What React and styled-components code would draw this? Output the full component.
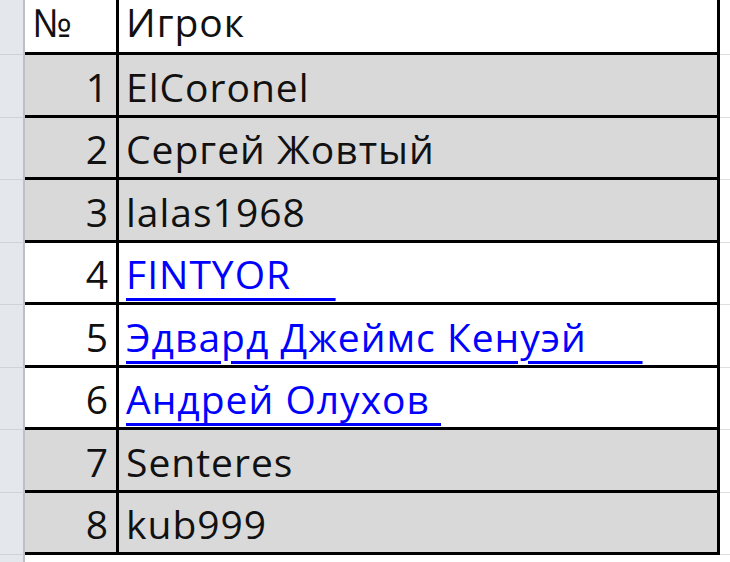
import React from 'react'
import styled, { createGlobalStyle } from 'styled-components'

const GlobalStyle = createGlobalStyle`
  html, body {
    margin: 0;
    padding: 0;
    background: #ffffff;
    overflow: hidden;
  }
`

const Sheet = styled.div`
  width: 730px;
  height: 562px;
  display: grid;
  grid-template-columns: 25px 94px 601px 1fr;
  grid-auto-rows: 62.5px;
  grid-template-rows: 55px;
  font-family: "Open Sans", "Noto Sans", sans-serif;
  font-size: 39px;
  font-weight: 500;
  letter-spacing: 1px;
  color: #111;
  overflow: hidden;
`

const RowHead = styled.div`
  background: #e4e7eb;
  border-right: 2px solid #bcc0c6;
  border-bottom: 1px solid #cfd3d8;
  box-sizing: border-box;
`

const Cell = styled.div`
  box-sizing: border-box;
  display: flex;
  align-items: flex-end;
  line-height: ${p => (p.$head ? '1' : '1.2')};
  white-space: pre;
  background: ${p => (p.$shade ? '#d9d9d9' : '#ffffff')};
  border-bottom: ${p => (p.$open ? '1px solid #e6e6e6' : '3px solid #000')};
  border-right: ${p => (p.$edge ? '3px solid #000' : 'none')};
  justify-content: ${p => (p.$num ? 'flex-end' : 'flex-start')};
  padding: 0 ${p => (p.$num ? '7px' : '0')} ${p => (p.$head ? '11px' : '4px')} ${p => (p.$num ? '0' : '7px')};
`

const Filler = styled.div`
  background: #ffffff;
  border-bottom: 1px solid #dedede;
  box-sizing: border-box;
`

const Link = styled.span`
  color: #0000ff;
  text-decoration: underline;
  text-decoration-thickness: 3px;
  text-underline-offset: 9px;
`

const players = [
  { n: 1, name: 'ElCoronel', shade: true },
  { n: 2, name: 'Сергей Жовтый', shade: true },
  { n: 3, name: 'lalas1968', shade: true },
  { n: 4, name: 'FINTYOR\u00a0\u00a0\u00a0\u00a0', link: true },
  { n: 5, name: 'Эдвард Джеймс Кенуэй\u00a0\u00a0\u00a0\u00a0\u00a0', link: true },
  { n: 6, name: 'Андрей Олухов\u00a0', link: true },
  { n: 7, name: 'Senteres', shade: true },
  { n: 8, name: 'kub999', shade: true },
]

const App = () => {
  return (
    <>
      <GlobalStyle />
      <Sheet>
        <RowHead />
        <Cell $edge $head>{'№'}</Cell>
        <Cell $edge $head>Игрок</Cell>
        <Filler />

        {players.map(p => (
          <React.Fragment key={p.n}>
            <RowHead />
            <Cell $num $edge $shade={p.shade}>{p.n}</Cell>
            <Cell $edge $shade={p.shade}>
              {p.link ? <Link>{p.name}</Link> : p.name}
            </Cell>
            <Filler />
          </React.Fragment>
        ))}

        <RowHead />
        <Cell $open />
        <Cell $open />
        <Filler />
      </Sheet>
    </>
  )
}

export default App
